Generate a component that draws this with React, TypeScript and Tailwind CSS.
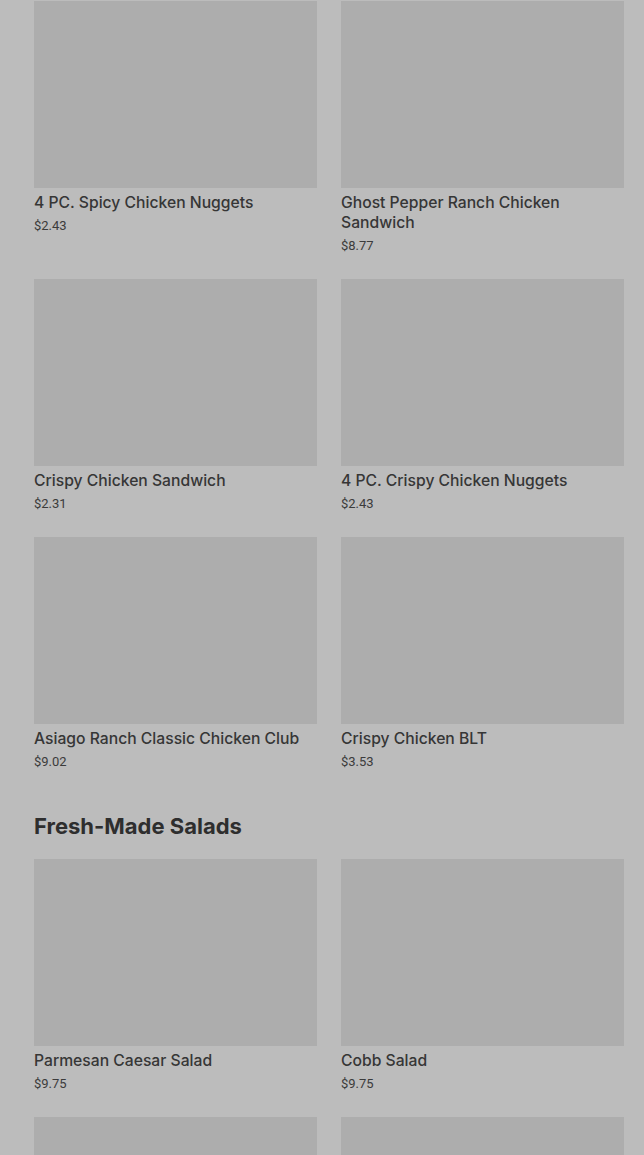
import React from 'react';

interface MenuItem {
  name: string;
  price: string;
}

const chickenItems: MenuItem[] = [
  { name: '4 PC. Spicy Chicken Nuggets', price: '$2.43' },
  { name: 'Ghost Pepper Ranch Chicken Sandwich', price: '$8.77' },
  { name: 'Crispy Chicken Sandwich', price: '$2.31' },
  { name: '4 PC. Crispy Chicken Nuggets', price: '$2.43' },
  { name: 'Asiago Ranch Classic Chicken Club', price: '$9.02' },
  { name: 'Crispy Chicken BLT', price: '$3.53' },
];

const saladItems: MenuItem[] = [
  { name: 'Parmesan Caesar Salad', price: '$9.75' },
  { name: 'Cobb Salad', price: '$9.75' },
  { name: 'Southwest Taco Salad', price: '$9.75' },
  { name: 'Apple Pecan Salad', price: '$9.75' },
];

const ItemCard: React.FC<{ item: MenuItem }> = ({ item }) => (
  <div className="flex flex-col">
    <div className="h-[187px] w-full bg-[#adadad]" />
    <p className="mt-[5px] font-['Inter',sans-serif] text-[15.7px] leading-5 font-medium text-[#363636]">{item.name}</p>
    <p className="mt-1 text-[13px] leading-[18px] text-[#3b3b3b]">{item.price}</p>
  </div>
);

const ItemGrid: React.FC<{ items: MenuItem[] }> = ({ items }) => (
  <div className="grid grid-cols-2 gap-x-6 gap-y-6">
    {items.map((item) => (
      <ItemCard key={item.name} item={item} />
    ))}
  </div>
);

export default function App() {
  return (
    <div
      className="h-[1155px] w-full overflow-hidden bg-[#bcbcbc] pt-px pl-[34px] pr-[20px]"
      style={{ fontFamily: 'Roboto, "Liberation Sans", sans-serif' }}
    >
      <ItemGrid items={chickenItems} />
      <h2 className="mt-[41px] mb-[19px] font-['Inter',sans-serif] text-[22px] leading-7 font-bold text-[#2e2e2e]">
        Fresh-Made Salads
      </h2>
      <ItemGrid items={saladItems} />
    </div>
  );
}
